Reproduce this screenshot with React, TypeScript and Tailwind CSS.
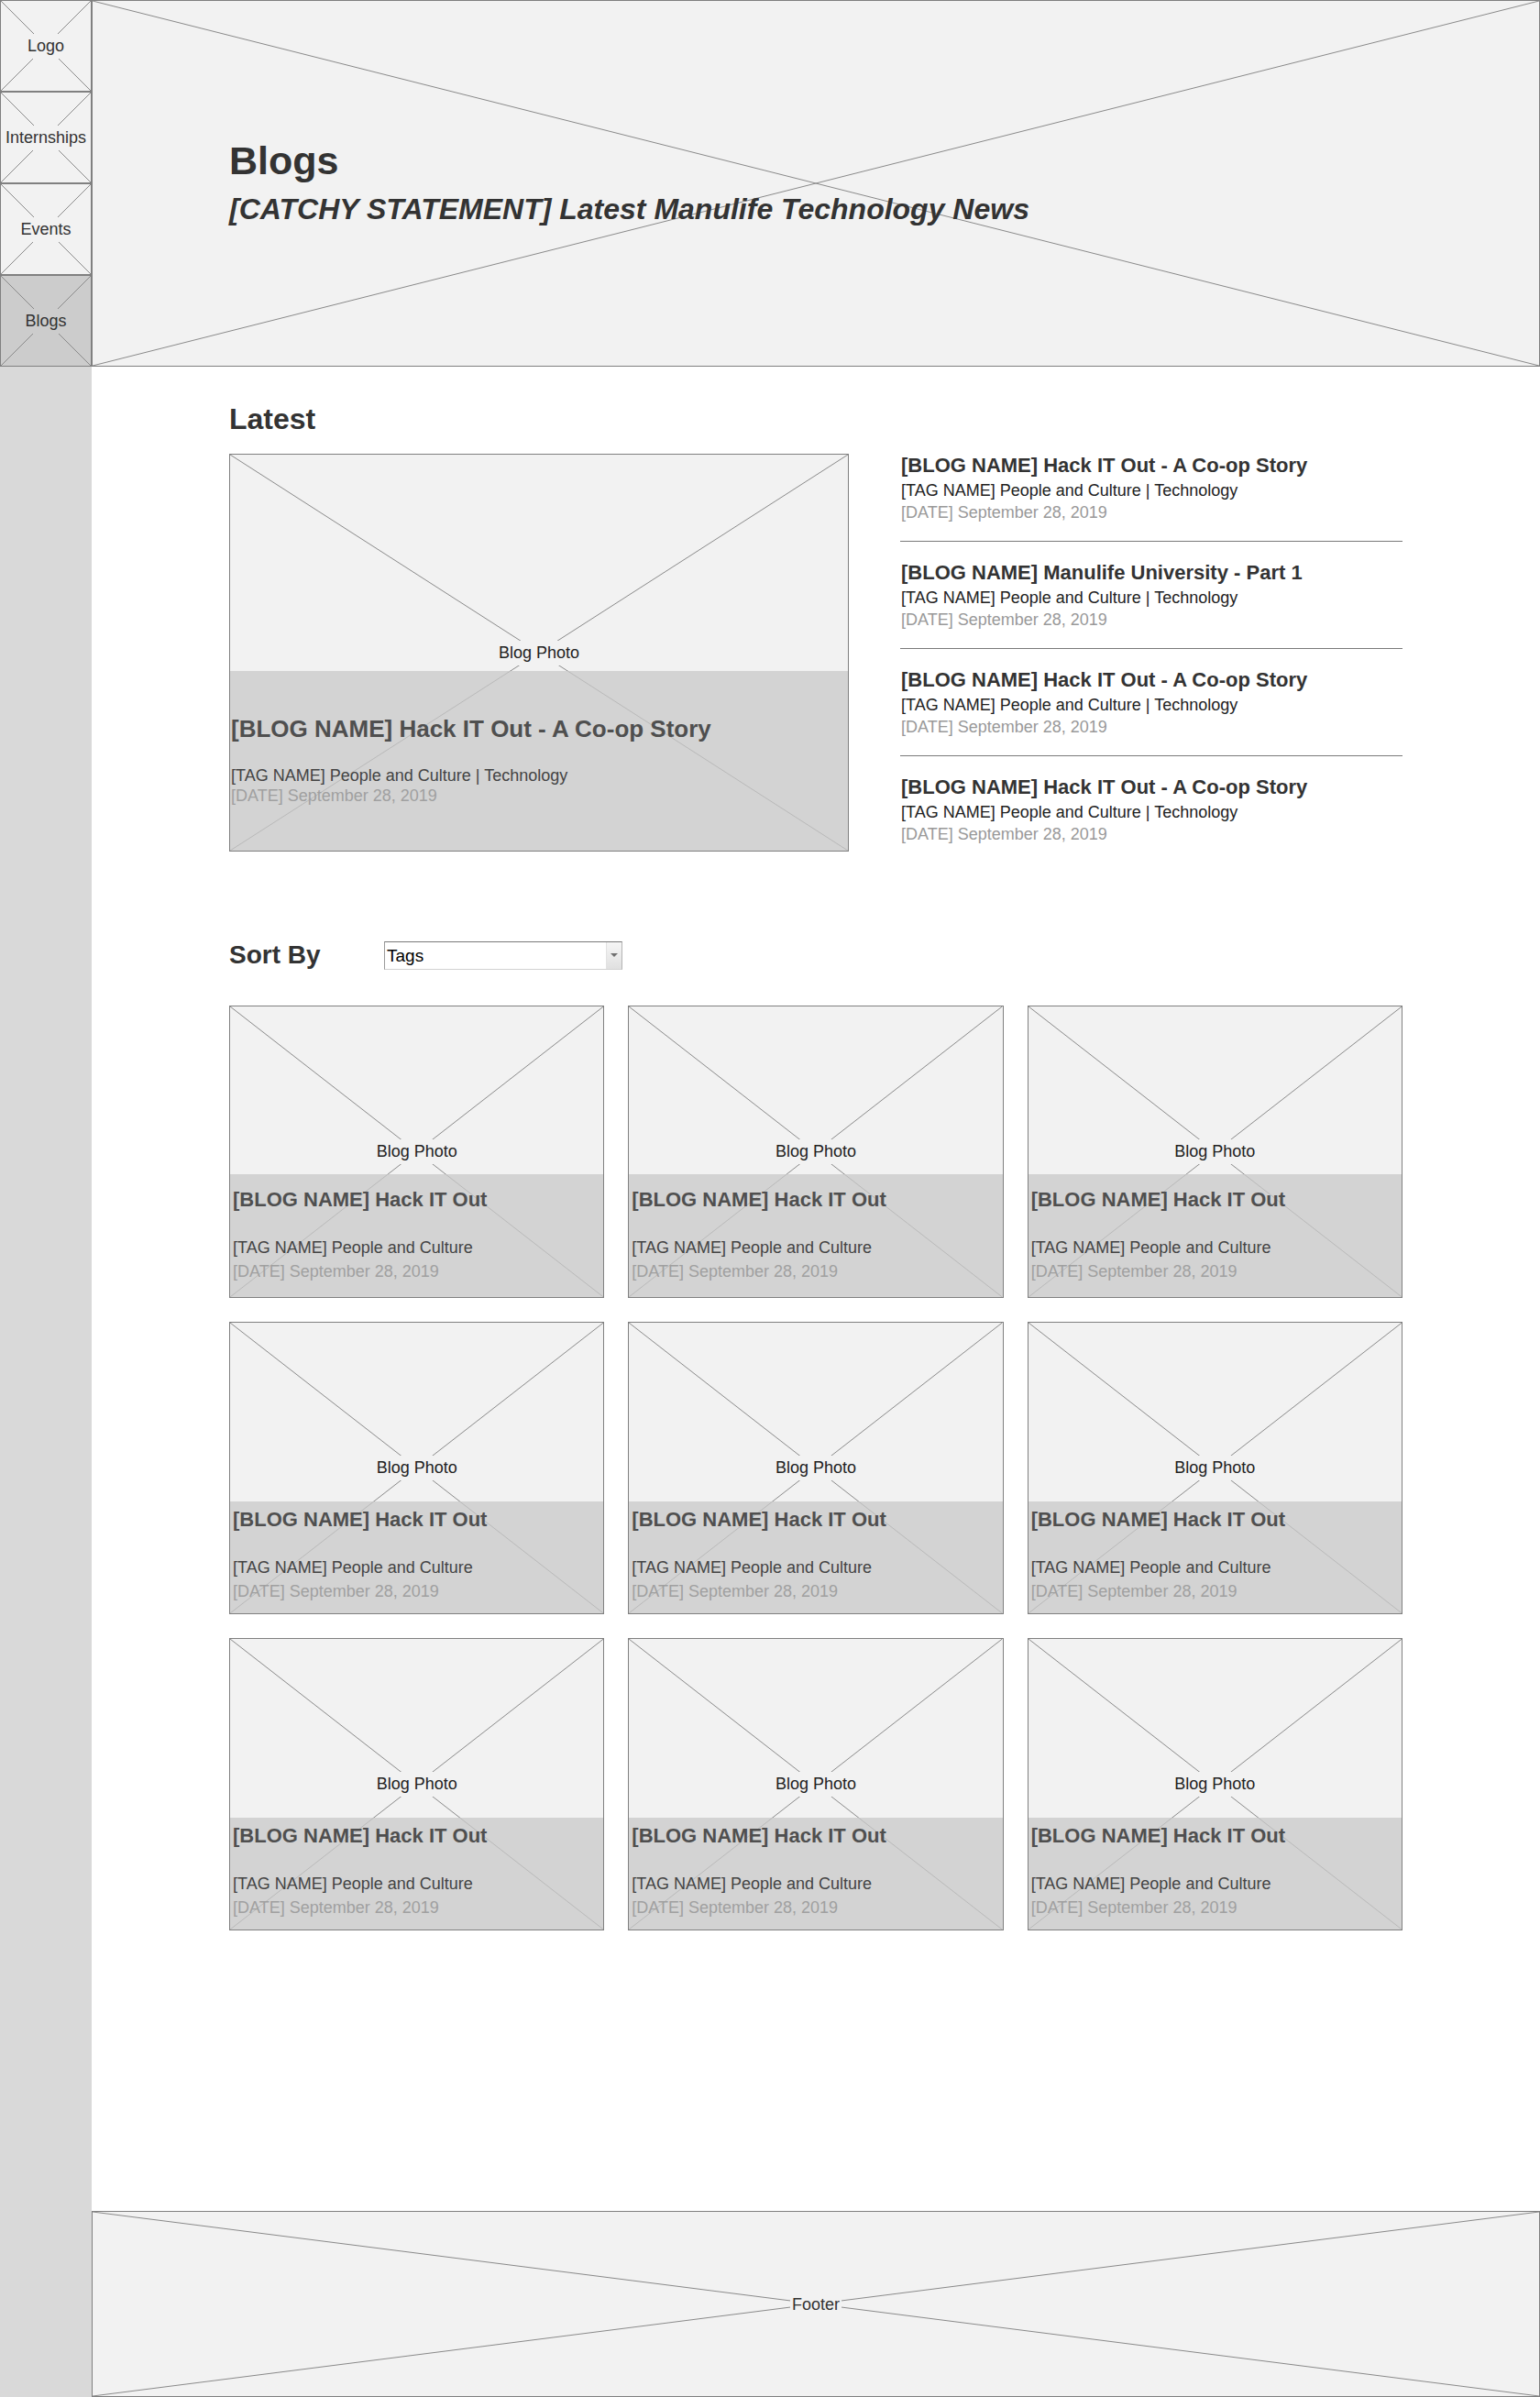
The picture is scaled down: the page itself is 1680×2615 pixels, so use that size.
import React from 'react';

// Wireframe placeholder cross, stretched over whatever box it sits in
const Cross: React.FC = () => (
  <svg
    className="pointer-events-none absolute inset-0 h-full w-full"
    viewBox="0 0 100 100"
    preserveAspectRatio="none"
  >
    <line x1="0" y1="0" x2="100" y2="100" stroke="#8a8a8a" strokeWidth="1" vectorEffect="non-scaling-stroke" />
    <line x1="0" y1="100" x2="100" y2="0" stroke="#8a8a8a" strokeWidth="1" vectorEffect="non-scaling-stroke" />
  </svg>
);

const navItems = [
  { label: 'Logo', active: false },
  { label: 'Internships', active: false },
  { label: 'Events', active: false },
  { label: 'Blogs', active: true },
];

const latestList = [
  '[BLOG NAME] Hack IT Out - A Co-op Story',
  '[BLOG NAME] Manulife University - Part 1',
  '[BLOG NAME] Hack IT Out - A Co-op Story',
  '[BLOG NAME] Hack IT Out - A Co-op Story',
];

const NavItem: React.FC<{ label: string; active: boolean }> = ({ label, active }) => (
  <div
    className={`relative h-[100px] border border-[#808080] ${active ? 'bg-[#cccccc]' : 'bg-[#f2f2f2]'}`}
  >
    <Cross />
    <div className="absolute inset-0 flex items-center justify-center">
      <span
        className={`px-[3px] py-[4px] text-[18px] leading-[19px] text-[#333] ${active ? 'bg-[#cccccc]' : 'bg-[#f2f2f2]'}`}
      >
        {label}
      </span>
    </div>
  </div>
);

const PhotoLabel: React.FC = () => (
  <div className="absolute inset-0 flex items-center justify-center">
    <span className="bg-[#f2f2f2] px-[4px] py-[4px] text-[18px] leading-[19px] text-[#222]">Blog Photo</span>
  </div>
);

const LatestCard: React.FC = () => (
  <div className="relative h-[434px] w-[676px] shrink-0 border border-[#808080] bg-[#f2f2f2]">
    <Cross />
    <PhotoLabel />
    <div className="absolute inset-x-0 top-[236px] bottom-0 bg-[#c8c8c8]/75 pl-[1px] pt-[48px]">
      <h3 className="text-[26px] font-bold leading-[30px] text-[#4f4f4f]">
        [BLOG NAME] Hack IT Out - A Co-op Story
      </h3>
      <p className="mt-[25px] text-[18px] leading-[22px] text-[#444]">
        [TAG NAME] People and Culture | Technology
      </p>
      <p className="text-[18px] leading-[22px] text-[#a0a0a0]">[DATE] September 28, 2019</p>
    </div>
  </div>
);

const GridCard: React.FC<{ firstRow: boolean }> = ({ firstRow }) => (
  <div className="relative h-[319px] border border-[#808080] bg-[#f2f2f2]">
    <Cross />
    <PhotoLabel />
    <div
      className={`absolute inset-x-0 bottom-0 bg-[#c8c8c8]/75 pl-[3px] ${
        firstRow ? 'top-[183px] pt-[15px]' : 'top-[195px] pt-[7px]'
      }`}
    >
      <h3 className="text-[22px] font-bold leading-[26px] text-[#4f4f4f]">[BLOG NAME] Hack IT Out</h3>
      <p className="mt-[26px] text-[18px] leading-[26px] text-[#444]">[TAG NAME] People and Culture</p>
      <p className="text-[18px] leading-[26px] text-[#a0a0a0]">[DATE] September 28, 2019</p>
    </div>
  </div>
);

const App: React.FC = () => {
  return (
    <div className="flex min-h-screen bg-white font-['Liberation_Sans',Arial,sans-serif]">
      {/* Side navigation */}
      <aside className="w-[100px] shrink-0 bg-[#d9d9d9]">
        {navItems.map((item) => (
          <NavItem key={item.label} label={item.label} active={item.active} />
        ))}
      </aside>

      <main className="flex min-w-0 flex-1 flex-col">
        {/* Hero */}
        <header className="relative h-[400px] border border-[#808080] bg-[#f2f2f2]">
          <Cross />
          <div className="relative pl-[149px] pt-[150px]">
            <h1 className="text-[43px] font-bold leading-[48px] text-[#333]">Blogs</h1>
            <p className="mt-[11px] text-[32px] font-bold italic leading-[36px] text-[#333]">
              [CATCHY STATEMENT] Latest Manulife Technology News
            </p>
          </div>
        </header>

        <div className="px-[150px]">
          {/* Latest */}
          <h2 className="mt-[39px] text-[32px] font-bold leading-[36px] text-[#333]">Latest</h2>
          <div className="mt-[20px] flex gap-[56px]">
            <LatestCard />
            <ul className="flex-1">
              {latestList.map((title, i) => (
                <li
                  key={i}
                  className={`pl-[1px] ${i > 0 ? 'pt-[21px]' : ''} ${
                    i < latestList.length - 1 ? 'border-b border-[#7a7a7a] pb-[19px]' : ''
                  }`}
                >
                  <h3 className="text-[22px] font-bold leading-[26px] text-[#333]">{title}</h3>
                  <p className="mt-[2px] text-[18px] leading-[24px] text-[#222]">
                    [TAG NAME] People and Culture | Technology
                  </p>
                  <p className="text-[18px] leading-[24px] text-[#999]">[DATE] September 28, 2019</p>
                </li>
              ))}
            </ul>
          </div>

          {/* Sort */}
          <div className="mt-[97px] flex h-[32px] items-center">
            <span className="w-[169px] text-[28px] font-bold leading-[32px] text-[#333]">Sort By</span>
            <div className="flex h-[31px] w-[260px] border border-t-[#7a7a7a] border-r-[#b4b4b4] border-b-[#d2d2d2] border-l-[#9a9a9a] bg-white">
              <span className="flex-1 pl-[2px] text-[19px] leading-[29px] text-black">Tags</span>
              <span className="flex w-[17px] items-center justify-center border-l border-[#e2e2e2] bg-linear-to-b from-[#f6f6f6] to-[#e0e0e0]">
                <span className="h-0 w-0 border-x-[4px] border-t-[4px] border-x-transparent border-t-[#707070]" />
              </span>
            </div>
          </div>

          {/* Grid */}
          <div className="mt-[39px] grid grid-cols-3 gap-x-[26px] gap-y-[26px]">
            {Array.from({ length: 9 }).map((_, i) => (
              <GridCard key={i} firstRow={i < 3} />
            ))}
          </div>
        </div>

        {/* Footer */}
        <footer className="relative mt-auto h-[203px] border border-[#808080] bg-[#f2f2f2]">
          <Cross />
          <div className="absolute inset-0 flex items-center justify-center">
            <span className="bg-[#f2f2f2] px-[2px] text-[18px] leading-[20px] text-[#333]">Footer</span>
          </div>
        </footer>
      </main>
    </div>
  );
};

export default App;
